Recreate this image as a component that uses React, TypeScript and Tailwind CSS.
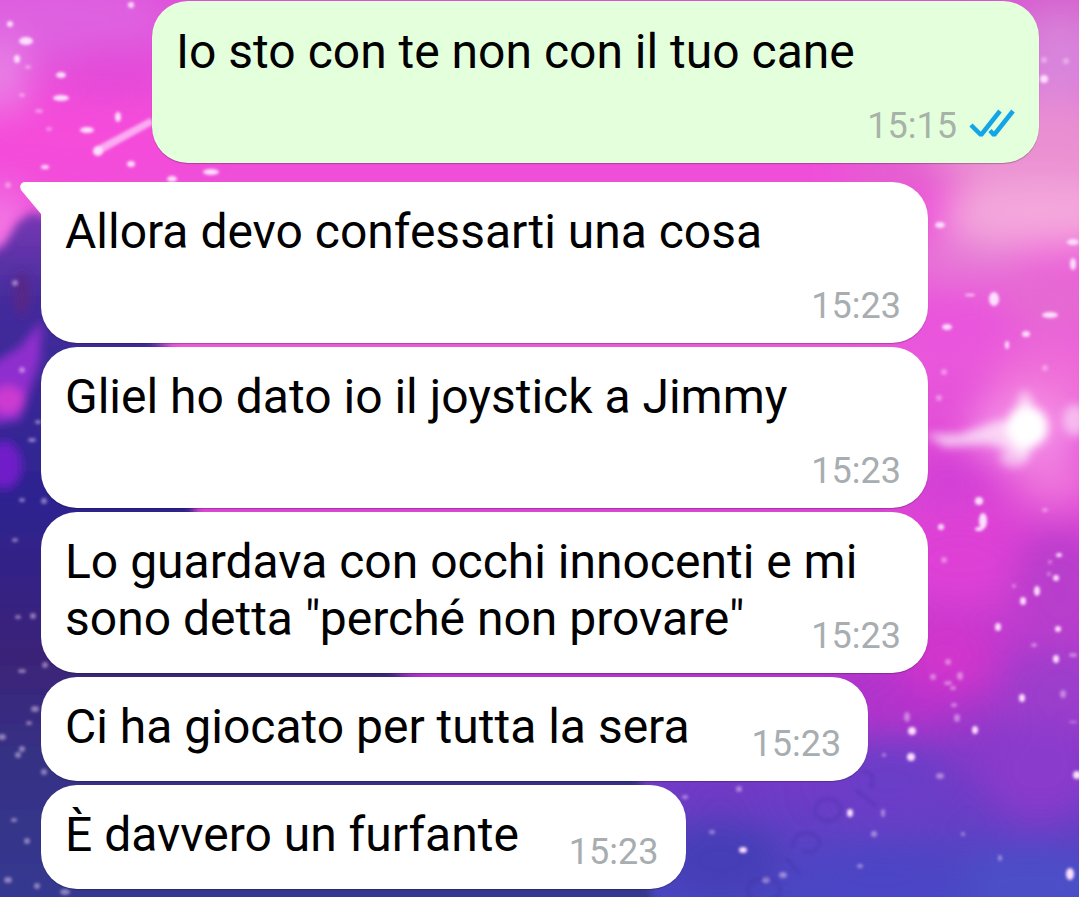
import { useId } from "react";
import { cva } from "class-variance-authority";

type Message = {
	text: string;
	time: string;
	layout: "stacked" | "wrapped" | "inline" | "compact";
	tail?: boolean;
};

type Blob = {
	cx: number;
	cy: number;
	rx: number;
	ry: number;
	fill: string;
};

const bubble = cva(
	"relative rounded-[36px] bg-white pt-[21px] pr-[27px] pb-[19px] pl-6 shadow-[0_1px_1px_rgba(0,0,0,0.25)]",
	{
		variants: {
			layout: {
				stacked: "flex w-full flex-col",
				wrapped: "flow-root w-full",
				inline: "flex w-fit gap-[62px]",
				compact: "flex w-fit gap-[50px]",
			},
		},
	},
);

const incoming: Message[] = [
	{ text: "Allora devo confessarti una cosa", time: "15:23", layout: "stacked", tail: true },
	{ text: "Gliel ho dato io il joystick a Jimmy", time: "15:23", layout: "stacked" },
	{ text: 'Lo guardava con occhi innocenti e mi\nsono detta "perché non provare"', time: "15:23", layout: "wrapped" },
	{ text: "Ci ha giocato per tutta la sera", time: "15:23", layout: "inline" },
	{ text: "È davvero un furfante", time: "15:23", layout: "compact" },
];

const nebula: Blob[] = [
	{ cx: 60, cy: 20, rx: 110, ry: 40, fill: "#de62e0" },
	{ cx: 110, cy: 70, rx: 50, ry: 24, fill: "#e348d8" },
	{ cx: 0, cy: 75, rx: 26, ry: 36, fill: "#e884e6" },
	{ cx: 80, cy: 140, rx: 120, ry: 40, fill: "#f54cda" },
	{ cx: 0, cy: 225, rx: 22, ry: 36, fill: "#f57fe6" },
	{ cx: 1060, cy: 10, rx: 60, ry: 30, fill: "#d465ce" },
	{ cx: 1060, cy: 65, rx: 50, ry: 50, fill: "#d984dc" },
	{ cx: 1040, cy: 150, rx: 120, ry: 50, fill: "#ea8fd2" },
	{ cx: 900, cy: 172, rx: 60, ry: 16, fill: "#e066cc" },
	{ cx: 1040, cy: 215, rx: 100, ry: 34, fill: "#f4a8dc" },
	{ cx: 960, cy: 260, rx: 60, ry: 22, fill: "#e57cd6" },
	{ cx: 1050, cy: 300, rx: 60, ry: 30, fill: "#e56cd2" },
	{ cx: 950, cy: 330, rx: 70, ry: 36, fill: "#e955dc" },
	{ cx: 1050, cy: 380, rx: 60, ry: 36, fill: "#ef70d8" },
	{ cx: 950, cy: 480, rx: 46, ry: 22, fill: "#d03cd6" },
	{ cx: 1055, cy: 480, rx: 40, ry: 28, fill: "#ee74dc" },
	{ cx: 960, cy: 560, rx: 70, ry: 44, fill: "#de3fd6" },
	{ cx: 1060, cy: 590, rx: 50, ry: 60, fill: "#b83ccc" },
	{ cx: 945, cy: 655, rx: 50, ry: 40, fill: "#d234cc" },
	{ cx: 1060, cy: 690, rx: 60, ry: 40, fill: "#9c3ccc" },
	{ cx: 900, cy: 705, rx: 60, ry: 24, fill: "#b532cc" },
	{ cx: 1040, cy: 770, rx: 60, ry: 50, fill: "#8a3acc" },
	{ cx: 890, cy: 780, rx: 60, ry: 40, fill: "#6a3cc8" },
	{ cx: 720, cy: 795, rx: 46, ry: 14, fill: "#7038c4" },
	{ cx: 720, cy: 860, rx: 60, ry: 40, fill: "#443eb6" },
	{ cx: 1030, cy: 885, rx: 90, ry: 30, fill: "#4b50c8" },
	{ cx: 880, cy: 880, rx: 90, ry: 30, fill: "#4b44c4" },
];

// cx, cy, rx, ry
const stars = [
	[10, 24, 3, 3], [26, 41, 7, 4], [17, 59, 3, 4], [61, 75, 5, 3], [61, 98, 8, 3],
	[118, 117, 3, 5], [87, 130, 7, 3], [131, 164, 4, 3], [131, 5, 3, 3],
	[211, 172, 8, 3], [172, 179, 5, 3], [45, 167, 4, 2],
	[994, 299, 5, 7], [940, 225, 5, 3], [1073, 242, 6, 3], [1073, 264, 3, 6],
	[1050, 315, 8, 3], [947, 327, 5, 3], [1026, 334, 4, 3], [1007, 345, 2, 4],
	[970, 295, 5, 1], [1044, 79, 4, 4],
	[979, 501, 4, 4], [983, 521, 4, 8], [979, 529, 4, 2], [941, 527, 3, 3],
	[1059, 555, 3, 2], [1056, 578, 3, 3], [1037, 591, 3, 5], [1023, 601, 3, 4],
	[998, 627, 3, 4], [1058, 629, 3, 3], [1056, 659, 3, 4],
	[1022, 698, 3, 4], [912, 731, 4, 4], [911, 757, 4, 4],
	[975, 730, 3, 4], [850, 813, 3, 4],
	[743, 850, 4, 3], [1077, 775, 4, 4],
	[1070, 874, 4, 6],
];

const faintStars = [
	[28, 67, 3, 2], [22, 95, 3, 2], [49, 129, 3, 2], [8, 185, 3, 3], [39, 111, 4, 2],
	[1045, 368, 3, 3], [944, 372, 3, 3], [939, 398, 3, 3], [1045, 510, 3, 2],
	[944, 560, 3, 3], [1050, 562, 2, 2], [1049, 574, 2, 2], [1014, 586, 2, 2],
	[948, 662, 3, 3], [933, 677, 3, 3], [948, 683, 4, 2], [953, 688, 3, 2],
	[954, 705, 3, 2], [1034, 645, 3, 2], [907, 717, 3, 5], [884, 755, 2, 2],
	[712, 832, 3, 2], [685, 797, 3, 2], [739, 789, 3, 3], [874, 834, 3, 3],
	[860, 866, 3, 2], [963, 834, 2, 2], [1000, 858, 2, 3], [38, 422, 3, 2],
	[32, 440, 4, 2], [22, 500, 3, 2], [15, 540, 3, 2], [44, 501, 3, 3], [18, 617, 3, 2],
	[22, 671, 4, 2], [45, 665, 3, 3], [29, 723, 3, 2], [22, 749, 3, 3], [18, 755, 3, 3],
	[15, 283, 3, 3], [27, 841, 3, 3], [8, 880, 4, 3], [37, 886, 3, 3], [65, 892, 5, 3],
	[14, 820, 3, 2], [44, 772, 3, 3], [35, 709, 4, 3], [33, 616, 3, 3], [22, 370, 3, 3],
	[2, 737, 4, 3], [1066, 61, 3, 3], [1044, 60, 3, 3], [1073, 655, 4, 2],
	[1063, 694, 3, 4], [1073, 722, 4, 1], [960, 676, 3, 4], [957, 718, 3, 4],
	[940, 776, 4, 3], [883, 813, 2, 4], [783, 875, 4, 3], [766, 880, 4, 3],
];

function Wallpaper() {
	const id = useId();

	return (
		<svg
			aria-hidden="true"
			className="absolute inset-0 -z-10 size-full"
			viewBox="0 0 1079 897"
			preserveAspectRatio="xMidYMid slice"
		>
			<defs>
				<linearGradient id={`${id}-sky`} x1="0" y1="0" x2="0" y2="1">
					<stop offset="0" stopColor="#df4fda" />
					<stop offset="0.15" stopColor="#f04cd9" />
					<stop offset="0.38" stopColor="#ea5adb" />
					<stop offset="0.6" stopColor="#da42d4" />
					<stop offset="0.76" stopColor="#b036cc" />
					<stop offset="0.88" stopColor="#703bc6" />
					<stop offset="1" stopColor="#4848c2" />
				</linearGradient>
				<linearGradient id={`${id}-shade`} x1="0" y1="0" x2="0" y2="1">
					<stop offset="0" stopColor="#7938b5" />
					<stop offset="0.12" stopColor="#442c9c" />
					<stop offset="0.4" stopColor="#2c2390" />
					<stop offset="0.62" stopColor="#3b2378" />
					<stop offset="0.75" stopColor="#363084" />
					<stop offset="1" stopColor="#353a92" />
				</linearGradient>
				<filter id={`${id}-soft`} x="-50%" y="-50%" width="200%" height="200%">
					<feGaussianBlur stdDeviation="18" />
				</filter>
				<filter id={`${id}-edge`} x="-20%" y="-20%" width="140%" height="140%">
					<feGaussianBlur stdDeviation="5" />
				</filter>
				<filter id={`${id}-star`} x="-10%" y="-10%" width="120%" height="120%">
					<feGaussianBlur stdDeviation="1.5" />
				</filter>
			</defs>

			<rect width="1079" height="897" fill={`url(#${id}-sky)`} />
			<g filter={`url(#${id}-soft)`}>
				{nebula.map((blob) => (
					<ellipse key={`${blob.cx}-${blob.cy}`} {...blob} />
				))}
			</g>

			{/* dark ridge on the left */}
			<path
				d="M-30 265L4 245L18 222L32 212L60 222L120 320L170 350L195 520L400 675L640 776L655 930H-30Z"
				fill={`url(#${id}-shade)`}
				filter={`url(#${id}-edge)`}
			/>
			<g filter={`url(#${id}-edge)`}>
				<path d="M-10 365L20 347L42 320L40 360L20 420L-10 425Z" fill="#8f2dce" />
				<ellipse cx="8" cy="400" rx="16" ry="14" fill="#cc3ad0" />
				<ellipse cx="4" cy="465" rx="18" ry="24" fill="#701fc8" />
				<ellipse cx="22" cy="294" rx="8" ry="22" fill="#592887" />
			</g>

			{/* bright star with its glow */}
			<ellipse cx="1025" cy="430" rx="56" ry="36" fill="#ffb6ee" opacity="0.6" filter={`url(#${id}-soft)`} />
			<g filter={`url(#${id}-edge)`} fill="#fff">
				<path d="M925 434L960 434L1000 420L1030 430L1020 454L990 444L945 447Z" opacity="0.65" />
				<circle cx="1027" cy="427" r="21" />
				<ellipse cx="1025" cy="425" rx="10" ry="34" opacity="0.6" />
				<ellipse cx="1014" cy="458" rx="14" ry="9" opacity="0.5" />
				<ellipse cx="1075" cy="420" rx="12" ry="16" opacity="0.5" />
			</g>
			<g filter={`url(#${id}-star)`} fill="#fddffd">
				<path d="M94 148L150 118L154 124L98 155Z" opacity="0.65" />
				<circle cx="98" cy="151" r="5" />
				{stars.map(([cx, cy, rx, ry]) => (
					<ellipse key={`${cx}-${cy}`} cx={cx} cy={cy} rx={rx} ry={ry} />
				))}
				<g opacity="0.45">
					{faintStars.map(([cx, cy, rx, ry]) => (
						<ellipse key={`${cx}-${cy}`} cx={cx} cy={cy} rx={rx} ry={ry} />
					))}
				</g>
			</g>

			{/* faint rings */}
			<g fill="none" stroke="#3b2a9c" strokeWidth="4" opacity="0.22" filter={`url(#${id}-star)`}>
				<ellipse cx="828" cy="810" rx="13" ry="11" />
				<path d="M792 848C794 832 808 828 818 838C824 846 812 856 802 850M786 858L800 874M856 790L876 806M862 772C872 770 876 780 870 788" />
				<ellipse cx="764" cy="890" rx="16" ry="12" />
			</g>
		</svg>
	);
}

function ReadTicks() {
	return (
		<svg
			role="img"
			aria-label="Read"
			className="mb-1 h-8 w-[46px]"
			viewBox="0 0 46 32"
			fill="none"
			stroke="#12a5e8"
			strokeWidth="4.5"
			strokeLinejoin="bevel"
		>
			<path d="M2 17L12 27L31 3" />
			<path d="M21 22.5L25 27L44 3" />
		</svg>
	);
}

function Tail() {
	return (
		<svg
			aria-hidden="true"
			className="absolute top-0 -left-[21px] h-9 w-[58px]"
			viewBox="0 0 58 36"
			fill="#fff"
		>
			<path d="M5 0H58V36H21V32L1 8C-1 4 1 0 5 0Z" />
		</svg>
	);
}

function IncomingBubble({ text, time, layout, tail }: Message) {
	const stamp = (
		<time className="float-right mt-7 self-end text-[36px] leading-[36px] text-[#a7adb0]">
			{time}
		</time>
	);

	return (
		<li className={bubble({ layout })}>
			{tail && <Tail />}
			<p className="relative whitespace-pre-line">
				{text}
				{layout === "wrapped" && stamp}
			</p>
			{layout !== "wrapped" && stamp}
		</li>
	);
}

export default function App() {
	return (
		<main className="relative isolate min-h-screen overflow-hidden pt-px pb-2 font-['Roboto',sans-serif] text-[48px] leading-[57px] text-black">
			<Wallpaper />
			<section className="pr-10 pl-[152px]">
				<div className="rounded-[36px] bg-[#e4ffdb] px-6 pt-[22px] pb-[19px] shadow-[0_1px_1px_rgba(0,0,0,0.25)]">
					<p>Io sto con te non con il tuo cane</p>
					<div className="mt-7 flex items-center justify-end gap-3">
						<time className="text-[36px] leading-[36px] text-[#a7b2a9]">15:15</time>
						<ReadTicks />
					</div>
				</div>
			</section>
			<ul className="mt-[19px] flex flex-col gap-1 pr-[151px] pl-[41px]">
				{incoming.map((message) => (
					<IncomingBubble key={message.text} {...message} />
				))}
			</ul>
		</main>
	);
}
